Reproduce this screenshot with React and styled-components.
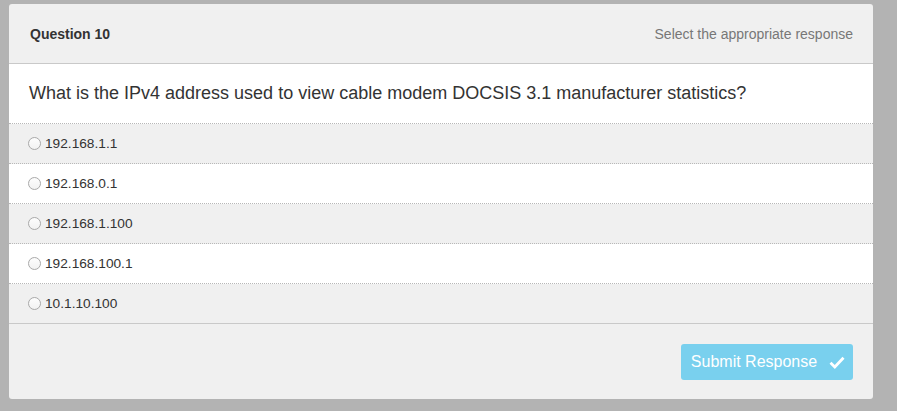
import React, { useState } from "react";
import styled, { createGlobalStyle } from "styled-components";

const GlobalStyle = createGlobalStyle`
  html, body {
    margin: 0;
    padding: 0;
    background: #b3b3b3;
    font-family: "Liberation Sans", Arial, sans-serif;
  }
`;

const Page = styled.div`
  width: 897px;
  height: 411px;
  box-sizing: border-box;
  padding: 4px 24px 0 9px;
`;

const Card = styled.div`
  width: 864px;
  height: 395px;
  background: #f0f0f0;
  border-radius: 3px;
  overflow: hidden;
  display: flex;
  flex-direction: column;
`;

const Header = styled.div`
  height: 59px;
  display: flex;
  align-items: center;
  justify-content: space-between;
  padding: 0 20px 0 21px;
  border-bottom: 1px solid #c9c9c9;
`;

const Title = styled.h2`
  margin: 0;
  font-size: 14px;
  font-weight: 700;
  color: #333;
`;

const Hint = styled.span`
  font-size: 14px;
  color: #777;
`;

const Question = styled.div`
  height: 59px;
  display: flex;
  align-items: center;
  padding: 0 20px;
  background: #fff;
  font-size: 18px;
  color: #333;
  border-bottom: 1px dotted #b8b8b8;
`;

const Option = styled.label`
  height: 39px;
  display: flex;
  align-items: center;
  padding: 0 0 0 19px;
  background: ${(p) => (p.$alt ? "#fff" : "#f0f0f0")};
  border-bottom: 1px ${(p) => (p.$last ? "solid #c9c9c9" : "dotted #b8b8b8")};
  font-size: 13.7px;
  color: #333;
  cursor: pointer;
`;

const Radio = styled.span`
  width: 13px;
  height: 13px;
  border-radius: 50%;
  border: 1px solid #a9a9a9;
  background: linear-gradient(#fdfdfd, #f2f2f2);
  margin: 0 4px 1px 0;
  box-sizing: border-box;
  flex: none;
  display: flex;
  align-items: center;
  justify-content: center;
  &::after {
    content: "";
    width: 6px;
    height: 6px;
    border-radius: 50%;
    background: ${(p) => (p.$checked ? "#444" : "transparent")};
  }
`;

const Footer = styled.div`
  flex: 1;
  display: flex;
  justify-content: flex-end;
  align-items: flex-start;
  padding: 20px 20px 0 0;
`;

const SubmitBtn = styled.button`
  width: 172px;
  height: 36px;
  border: none;
  border-radius: 3px;
  background: #79d0ee;
  color: #fff;
  font-family: "Liberation Sans", Arial, sans-serif;
  font-size: 16px;
  display: flex;
  align-items: center;
  justify-content: center;
  gap: 12px;
  padding: 0 0 0 2px;
  cursor: pointer;
`;

const answers = [
  "192.168.1.1",
  "192.168.0.1",
  "192.168.1.100",
  "192.168.100.1",
  "10.1.10.100",
];

const App = () => {
  const [picked, setPicked] = useState(null);
  return (
    <>
      <GlobalStyle />
      <Page>
        <Card>
          <Header>
            <Title>Question 10</Title>
            <Hint>Select the appropriate response</Hint>
          </Header>
          <Question>
            What is the IPv4 address used to view cable modem DOCSIS 3.1 manufacturer statistics?
          </Question>
          {answers.map((a, i) => (
            <Option
              key={a}
              $alt={i % 2 === 1}
              $last={i === answers.length - 1}
              onClick={() => setPicked(i)}
            >
              <Radio $checked={picked === i} />
              {a}
            </Option>
          ))}
          <Footer>
            <SubmitBtn>
              Submit Response
              <svg width="16" height="13" viewBox="0 0 16 13">
                <path
                  d="M1.5 6.8 L5.8 11 L14.5 1.8"
                  fill="none"
                  stroke="#fff"
                  strokeWidth="2.8"
                />
              </svg>
            </SubmitBtn>
          </Footer>
        </Card>
      </Page>
    </>
  );
};

export default App;
